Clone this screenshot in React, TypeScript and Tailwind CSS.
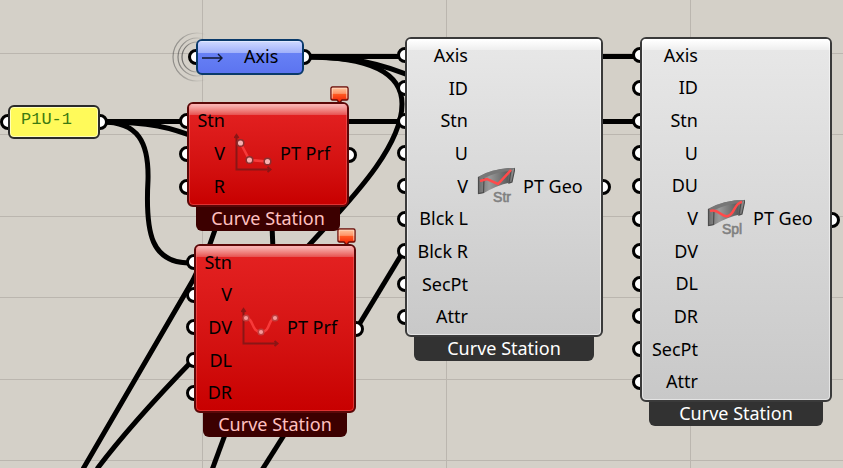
import React from 'react';
import clsx from 'clsx';

type Tone = 'error' | 'normal';

interface GraphNodeProps {
  inputs: string[];
  output: string;
  caption: string;
  icon: React.ReactNode;
  tone: Tone;
  className: string;
  labelWidth: string;
}

const Port: React.FC<{ side: 'left' | 'right' }> = ({ side }) => (
  <span
    className={clsx(
      'absolute top-1/2 size-4 -translate-y-1/2 rounded-full border-[3px] border-black bg-white',
      side === 'left' ? '-left-2' : '-right-2'
    )}
  />
);

const Balloon: React.FC = () => (
  <svg className="absolute -top-4 right-0 h-5 w-[19px]" viewBox="0 0 19 20">
    <defs>
      <linearGradient id="balloon" x1="0" y1="0" x2="0" y2="1">
        <stop offset="0" stopColor="#ffc9a0" />
        <stop offset="0.4" stopColor="#ff9468" />
        <stop offset="0.45" stopColor="#ff5a22" />
        <stop offset="1" stopColor="#f01800" />
      </linearGradient>
    </defs>
    <path
      d="M2.500 1h14q1.500 0 1.500 1.500v10q0 1.500-1.500 1.500H12l-2.500 3L7 14H2.500Q1 14 1 12.500v-10Q1 1 2.500 1Z"
      fill="url(#balloon)"
      stroke="#6a0c08"
      strokeWidth="1.400"
    />
    <path d="M2.200 12.500V2.200h14.600v10.300" fill="none" stroke="#ffd9c4" strokeWidth="0.800" />
  </svg>
);

const ProfileIcon: React.FC<{ curved?: boolean }> = ({ curved }) => (
  <svg className="h-10 w-[38px] shrink-0" viewBox="0 0 38 40">
    <g fill="none" stroke="#8a1616" strokeWidth="2">
      <path d="M2.500 3v33.500H35" />
      <path d="M.5 5 2.500 2l2 3M33.500 34l3 2.500-3 2.500" />
    </g>
    {curved ? (
      <>
        <path d="M5 11c8 0 5 14 15 14s7-14 14-14" fill="none" stroke="#f73a3a" strokeWidth="2.500" />
        <g fill="#f79a9a" stroke="#c04040" strokeWidth="1.500">
          <circle cx="5" cy="11" r="2.800" />
          <circle cx="20" cy="25" r="2.800" />
          <circle cx="34" cy="11" r="2.800" />
        </g>
      </>
    ) : (
      <>
        <path d="M6.500 10l9 17 18 1.500" fill="none" stroke="#f73a3a" strokeWidth="2.500" />
        <g fill="#f7b0b0" stroke="#8a3030" strokeWidth="1.500">
          <circle cx="6.500" cy="10" r="3.300" />
          <circle cx="15.500" cy="27" r="3.300" />
          <circle cx="33.500" cy="28.500" r="3.300" />
        </g>
      </>
    )}
  </svg>
);

const GeometryIcon: React.FC<{ label: string; line: string }> = ({ label, line }) => (
  <svg className="h-10 w-[38px] shrink-0" viewBox="0 0 38 40">
    <defs>
      <linearGradient id="slab" x1="0" y1="0" x2="1" y2="0">
        <stop offset="0" stopColor="#6a6a6a" />
        <stop offset="0.3" stopColor="#9a9a9a" />
        <stop offset="0.8" stopColor="#5c5c5c" />
        <stop offset="1" stopColor="#a0a0a0" />
      </linearGradient>
    </defs>
    <path d="M1 11Q16 2 38 2l-3 14Q20 19 7 27l-6 1Z" fill="url(#slab)" />
    <path d="M1 11l6 1Q20 6 34 5l4-3Q16 2 1 11Z" fill="#777" />
    <path d="M1.500 11v16.500l5-1 .5-14.500M34 5l-2 12 3-1 3-14" fill="none" stroke="#4c4c4c" strokeWidth="1.200" />
    <path d={line} fill="none" stroke="#ff4a4a" strokeWidth="2.500" />
    <text
      x="25"
      y="36"
      textAnchor="middle"
      className="fill-[#808080] font-['Liberation_Sans',sans-serif] text-[14px]"
      stroke="#808080"
      strokeWidth="0.600"
    >
      {label}
    </text>
  </svg>
);

const GraphNode: React.FC<GraphNodeProps> = ({
  inputs,
  output,
  caption,
  icon,
  tone,
  className,
  labelWidth,
}) => {
  const isError = tone === 'error';

  return (
    <section className={clsx('absolute flex flex-col', className)}>
      <div className="relative flex flex-1 flex-col">
        <div className="absolute inset-0 flex flex-col pt-[2px] pb-1">
          {inputs.map((name) => (
            <span key={name} className="relative flex-1">
              <Port side="left" />
            </span>
          ))}
        </div>
        <Port side="right" />
        <div
          className={clsx(
            'relative z-10 flex flex-1 items-center overflow-hidden rounded-md border-2 pb-[2px]',
            isError
              ? 'border-[#5a0808] bg-linear-to-b from-[#e52222] to-[#c80000]'
              : 'border-[#3a3a3a] bg-linear-to-b from-[#e8e8e8] to-[#c8c8c8]'
          )}
        >
          <div
            className={clsx(
              'absolute inset-x-0 top-0 h-[11px] border-t',
              isError
                ? 'border-[#ffd0d0] bg-linear-to-b from-[#f6b4b4] to-[#e65050]'
                : 'border-white bg-linear-to-b from-white to-[#eeeeee]'
            )}
          />
          <div
            className={clsx(
              'absolute inset-0 rounded-sm border',
              isError ? 'border-[#ff8080]/40' : 'border-white/50'
            )}
          />
          <ul className={clsx('relative flex h-full shrink-0 flex-col text-right', labelWidth)}>
            {inputs.map((name) => (
              <li key={name} className="flex flex-1 items-center justify-end pb-px whitespace-nowrap">
                {name}
              </li>
            ))}
          </ul>
          <div className="relative ml-[9px] flex items-center gap-2 pb-px whitespace-nowrap">
            {icon}
            <span>{output}</span>
          </div>
        </div>
      </div>
      <h2
        className={clsx(
          'relative z-10 mx-[9px] flex h-6 items-center justify-center rounded-b-md pb-[2px] whitespace-nowrap',
          isError ? 'bg-[#3c0000] text-[#ffc0c0]' : 'bg-[#323232] text-white'
        )}
      >
        {caption}
      </h2>
      {isError && <Balloon />}
    </section>
  );
};

const Wires: React.FC = () => (
  <svg className="absolute inset-0 size-full" fill="none" stroke="#000" strokeWidth="5">
    <defs>
      <linearGradient id="ripple" gradientUnits="userSpaceOnUse" x1="172" y1="0" x2="206" y2="0">
        <stop offset="0" stopColor="#444" />
        <stop offset="1" stopColor="#444" stopOpacity="0" />
      </linearGradient>
    </defs>
    <g stroke="#bbb6af" strokeWidth="1">
      <path d="M0 53.500H2000M0 134.500H2000M0 216.500H2000M0 297.500H2000M0 379.500H2000M0 460.500H2000" />
      <path d="M202.500 0V2000M446.500 0V2000M690.500 0V2000" />
    </g>
    <g stroke="url(#ripple)" strokeWidth="1.200">
      <circle cx="197" cy="57" r="15" />
      <circle cx="197" cy="57" r="19" opacity=".7" />
      <circle cx="197" cy="57" r="24" opacity=".5" />
    </g>
    <path d="M306 56.500H640" />
    <path d="M306 57C350 57 380 62 420 80" />
    <path d="M306 57C365 57 402 70 402 104C402 145 355 195 323 230L262 296" />
    <path d="M102 121.500H640" />
    <path d="M102 122C150 122 170 127 200 139" />
    <path d="M102 122C138 122 149 142 148 180C145 235 152 263 190 263" />
    <path d="M216 227L210 244L193 280L83 469" />
    <path d="M272 225L273 250" />
    <path d="M192 361Q130 425 97 469" />
    <path d="M357 328L403 252" />
    <path d="M226 432L212 470" />
    <path d="M286 432L262 470" />
  </svg>
);

const App: React.FC = () => {
  return (
    <main className="relative min-h-screen w-full overflow-hidden bg-[#d4d0c8] font-['Noto_Sans',sans-serif] text-lg leading-6 font-normal text-black">
      <Wires />

      <div className="absolute top-[105px] left-[8px] h-[34px] w-[92px]">
        <Port side="left" />
        <Port side="right" />
        <div className="relative h-full rounded-md border-2 border-[#2a2a2a] bg-[#fffa5a] px-[11px] pt-px font-['Liberation_Mono',monospace] text-[17px] text-[#3c7a10] shadow-[inset_0_0_0_1px_#ffffb8]">
          P1U-1
        </div>
      </div>

      <div className="absolute top-[39px] left-[196px] h-[36px] w-[108px]">
        <Port side="left" />
        <Port side="right" />
        <div className="relative flex h-full items-center gap-5 overflow-hidden rounded-md border-2 border-[#0a3a6a] bg-linear-to-b from-[#6e88f8] to-[#5c74f0] px-1 pb-[2px]">
          <div className="absolute inset-x-0 top-0 h-3 border-t border-[#e0e8ff] bg-linear-to-b from-[#ccd6ff] to-[#a0b0fa]" />
          <svg className="relative h-3 w-[22px]" viewBox="0 0 22 12" fill="none" stroke="#101830" strokeWidth="1.400">
            <path d="M0 8h20M16 4l4 4-4 4" />
          </svg>
          <span className="relative">Axis</span>
        </div>
      </div>

      <GraphNode
        className="top-[102px] left-[187px] h-[129px] w-[162px]"
        labelWidth="w-[36px]"
        tone="error"
        inputs={['Stn', 'V', 'R']}
        output="PT Prf"
        caption="Curve Station"
        icon={<ProfileIcon />}
      />
      <GraphNode
        className="top-[244px] left-[194px] h-[193px] w-[162px]"
        labelWidth="w-[36px]"
        tone="error"
        inputs={['Stn', 'V', 'DV', 'DL', 'DR']}
        output="PT Prf"
        caption="Curve Station"
        icon={<ProfileIcon curved />}
      />
      <GraphNode
        className="top-[37px] left-[405px] h-[324px] w-[198px]"
        labelWidth="w-[61px]"
        tone="normal"
        inputs={['Axis', 'ID', 'Stn', 'U', 'V', 'Blck L', 'Blck R', 'SecPt', 'Attr']}
        output="PT Geo"
        caption="Curve Station"
        icon={<GeometryIcon label="Str" line="M3 15l7-2 11 5L34 4" />}
      />
      <GraphNode
        className="top-[37px] left-[640px] h-[389px] w-[192px]"
        labelWidth="w-[56px]"
        tone="normal"
        inputs={['Axis', 'ID', 'Stn', 'U', 'DU', 'V', 'DV', 'DL', 'DR', 'SecPt', 'Attr']}
        output="PT Geo"
        caption="Curve Station"
        icon={<GeometryIcon label="Spl" line="M3 13c9-3 11 7 18 5s6-13 14-14" />}
      />
    </main>
  );
};

export default App;
